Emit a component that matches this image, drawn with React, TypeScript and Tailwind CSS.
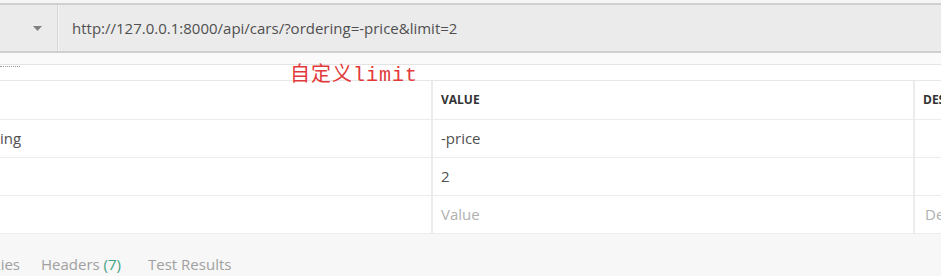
const ROWS = [
  { key: "ing", value: "-price", desc: "", placeholder: false },
  { key: "", value: "2", desc: "", placeholder: false },
  { key: "", value: "Value", desc: "De", placeholder: true },
];

export default function App() {
  return (
    <div
      className="w-[941px] h-[277px] overflow-hidden bg-white text-[#505050]"
      style={{ fontFamily: '"Open Sans", "Noto Sans", sans-serif' }}
    >
      {/* URL bar */}
      <div className="h-[3px] bg-[#f5f5f5]" />
      <div className="flex h-[50px] border-y-2 border-[#cfcfcf] bg-[#ebebeb]">
        <div className="flex w-[57px] items-center justify-end pr-[15px]">
          <svg width="9" height="5" viewBox="0 0 9 5">
            <path d="M0 0h9L4.5 5z" fill="#808080" />
          </svg>
        </div>
        <div className="w-[2px] border-l border-[#d6d6d6] bg-[#f4f4f4]" />
        <div className="flex items-center pl-[13px] text-[15px] text-[#505050]">
          http://127.0.0.1:8000/api/cars/?ordering=-price&amp;limit=2
        </div>
      </div>

      {/* sub-tab strip (cut off) */}
      <div className="h-[12px] border-b border-[#e4e4e4] bg-[#fafafa]" />
      <div className="relative h-[16px] border-b border-[#e8e8e8]">
        <div className="absolute left-0 top-[1px] h-[1px] w-[20px] border-t border-dotted border-[#999]" />
        <span
          className="absolute left-[290px] top-[1px] text-[20px] leading-none tracking-[1px] text-[#e23a3a]"
          style={{ fontFamily: '"Liberation Mono", "Noto Sans CJK SC", monospace' }}
        >
          自定义limit
        </span>
      </div>

      {/* params table */}
      <div className="grid grid-cols-[433px_482px_1fr]">
        <div className="h-[39px] border-r-2 border-b border-[#ececec]" />
        <div className="flex h-[39px] items-center border-r-2 border-b border-[#ececec] pl-[8px] text-[12px] font-bold text-[#333]">
          VALUE
        </div>
        <div className="flex h-[39px] items-center border-b border-[#ececec] pl-[8px] text-[12px] font-bold text-[#333]">
          DESCRIPTION
        </div>
        {ROWS.map((r, i) => (
          <div key={i} className="contents">
            <div className="flex h-[38px] items-center border-r-2 border-b border-[#ececec] text-[15px]">
              {r.key}
            </div>
            <div
              className={
                "flex h-[38px] items-center border-r-2 border-b border-[#ececec] pl-[8px] text-[15px] " +
                (r.placeholder ? "text-[#b0b0b0]" : "text-[#505050]")
              }
            >
              {r.value}
            </div>
            <div className="flex h-[38px] items-center border-b border-[#ececec] pl-[10px] text-[15px] text-[#b0b0b0]">
              {r.desc}
            </div>
          </div>
        ))}
      </div>

      {/* bottom tabs */}
      <div className="flex h-[42px] items-end bg-[#f7f7f7] pb-[1px] text-[15px] text-[#a0a0a0]">
        <div className="flex w-[20px] justify-end overflow-hidden">
          <span className="whitespace-nowrap">Cookies</span>
        </div>
        <span className="ml-[21px]">
          Headers <span className="text-[#3fa285]">(7)</span>
        </span>
        <span className="ml-[27px]">Test Results</span>
      </div>
    </div>
  );
}
